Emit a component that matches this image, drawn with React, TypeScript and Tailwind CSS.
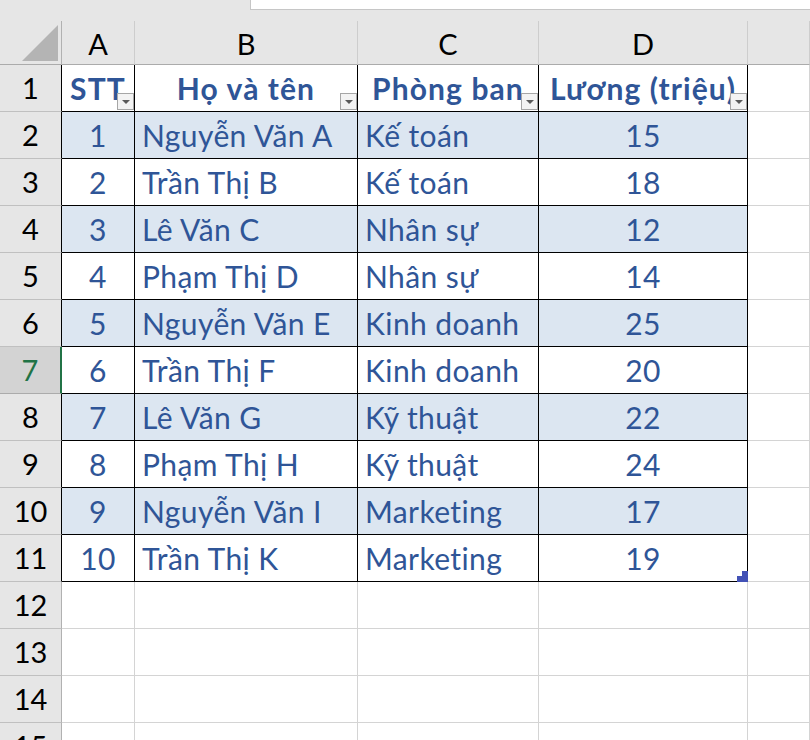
import React from 'react';

type Staff = { stt: number; name: string; dept: string; salary: number };

const staff: Staff[] = [
  { stt: 1, name: 'Nguyễn Văn A', dept: 'Kế toán', salary: 15 },
  { stt: 2, name: 'Trần Thị B', dept: 'Kế toán', salary: 18 },
  { stt: 3, name: 'Lê Văn C', dept: 'Nhân sự', salary: 12 },
  { stt: 4, name: 'Phạm Thị D', dept: 'Nhân sự', salary: 14 },
  { stt: 5, name: 'Nguyễn Văn E', dept: 'Kinh doanh', salary: 25 },
  { stt: 6, name: 'Trần Thị F', dept: 'Kinh doanh', salary: 20 },
  { stt: 7, name: 'Lê Văn G', dept: 'Kỹ thuật', salary: 22 },
  { stt: 8, name: 'Phạm Thị H', dept: 'Kỹ thuật', salary: 24 },
  { stt: 9, name: 'Nguyễn Văn I', dept: 'Marketing', salary: 17 },
  { stt: 10, name: 'Trần Thị K', dept: 'Marketing', salary: 19 },
];

const font = { fontFamily: 'Lato, "Open Sans", "Noto Sans", sans-serif' };

function FilterButton() {
  return (
    <span className="absolute right-0 bottom-[1px] flex h-[17px] w-[17px] items-center justify-center border border-[#a6a6a6] bg-[#f3f3f3]">
      <svg width="8" height="4" viewBox="0 0 8 4">
        <polygon points="0,0 8,0 4,4" fill="#5a5a5a" />
      </svg>
    </span>
  );
}

function RowHead({ n, active, inTable }: { n: number; active?: boolean; inTable?: boolean }) {
  const cls = active
    ? 'bg-[#d3d3d3] text-[#217346] border-r-2 border-r-[#217346] border-b-[#ababab]'
    : inTable
      ? 'bg-[#e6e6e6] text-black border-r-black border-b-[#c0c0c0]'
      : 'bg-[#e6e6e6] text-black border-r-[#b1b1b1] border-b-[#c0c0c0]';
  return (
    <div className={`flex h-[47px] items-center justify-center border-r border-b text-[29px] ${cls}`}>
      {n}
    </div>
  );
}

export default function App() {
  const blanks = [12, 13, 14, 15];
  return (
    <div className="h-[740px] w-[810px] overflow-hidden bg-white" style={font}>
      {/* strip above the column headers */}
      <div className="flex h-[21px] bg-[#e6e6e6]">
        <div className="w-[250px]" />
        <div className="h-[10px] flex-1 border-b border-l border-[#c6c6c6] bg-white" />
      </div>

      <div className="grid grid-cols-[62px_73px_223px_181px_209px_1fr]">
        {/* column headers */}
        <div className="relative h-[44px] border-r border-b border-r-[#b1b1b1] border-b-[#ababab] bg-[#e6e6e6]">
          <svg className="absolute left-[22px] top-[4px]" width="36" height="36" viewBox="0 0 36 36">
            <polygon points="0,36 36,36 36,0" fill="#b4b4b4" />
          </svg>
        </div>
        {['A', 'B', 'C', 'D', ''].map((c, i) => (
          <div
            key={i}
            className="flex h-[44px] items-center justify-center border-r border-b border-r-[#cdcdcd] border-b-[#ababab] bg-[#e6e6e6] pt-[3px] text-[29px] text-black"
          >
            {c}
          </div>
        ))}

        {/* row 1: table header */}
        <RowHead n={1} inTable />
        {['STT', 'Họ và tên', 'Phòng ban', 'Lương (triệu)'].map((h) => (
          <div
            key={h}
            className="relative flex h-[47px] items-center justify-center overflow-hidden whitespace-nowrap border-r border-b border-black bg-white text-[30px] font-bold tracking-[1.1px] text-[#2f5597]"
          >
            {h}
            <FilterButton />
          </div>
        ))}
        <div className="h-[47px] border-r border-b border-[#d4d4d4]" />

        {/* data rows */}
        {staff.map((s, i) => {
          const bg = i % 2 === 0 ? 'bg-[#dce6f1]' : 'bg-white';
          const cell = `flex h-[47px] items-center whitespace-nowrap border-r border-b border-black text-[30px] tracking-[0.4px] text-[#2f5597] ${bg}`;
          const last = i === staff.length - 1;
          return (
            <React.Fragment key={s.stt}>
              <RowHead n={i + 2} active={i + 2 === 7} inTable />
              <div className={`${cell} justify-center`}>{s.stt}</div>
              <div className={`${cell} pl-[7px]`}>{s.name}</div>
              <div className={`${cell} pl-[7px]`}>{s.dept}</div>
              <div className={`${cell} relative justify-center`}>
                {s.salary}
                {last && (
                  <svg className="absolute right-[-1px] bottom-[-1px]" width="11" height="11" viewBox="0 0 11 11">
                    <polygon points="0,5 5,5 5,0 11,0 11,11 0,11" fill="#4352b6" />
                  </svg>
                )}
              </div>
              <div className="h-[47px] border-r border-b border-[#d4d4d4]" />
            </React.Fragment>
          );
        })}

        {/* empty rows */}
        {blanks.map((n) => (
          <React.Fragment key={n}>
            <RowHead n={n} />
            {[0, 1, 2, 3, 4].map((c) => (
              <div key={c} className="h-[47px] border-r border-b border-[#d4d4d4]" />
            ))}
          </React.Fragment>
        ))}
      </div>
    </div>
  );
}
